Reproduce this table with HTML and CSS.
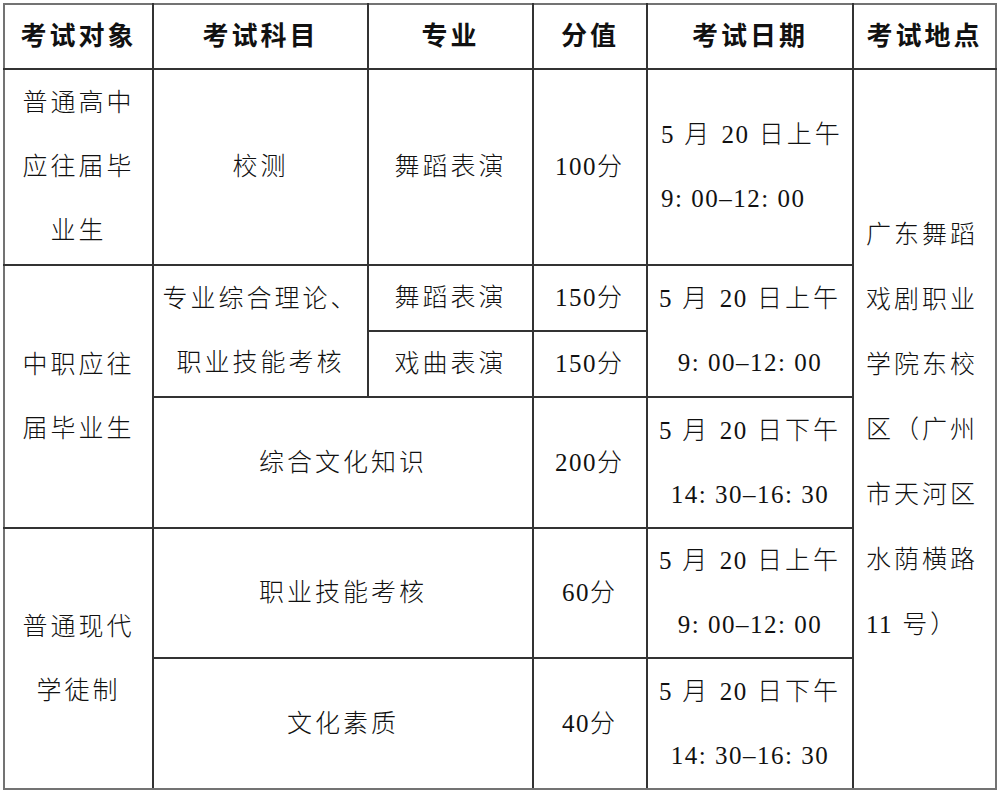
FILE: index.html
```html
<!DOCTYPE html>
<html lang="zh-CN">
<head>
<meta charset="utf-8">
<title>考试安排</title>
<link rel="stylesheet" href="styles.css">
</head>
<body>
<table class="exam">
  <colgroup>
    <col class="c1"><col class="c2"><col class="c3"><col class="c4"><col class="c5"><col class="c6">
  </colgroup>
  <thead>
    <tr class="rh">
      <th class="el">考试对象</th><th>考试科目</th><th>专业</th><th>分值</th><th>考试日期</th><th class="er">考试地点</th>
    </tr>
  </thead>
  <tbody>
    <tr class="r1">
      <td class="el">普通高中<br>应往届毕<br>业生</td>
      <td>校测</td>
      <td>舞蹈表演</td>
      <td><span class="n">100</span>分</td>
      <td class="date left"><span class="n">5</span> 月 <span class="n">20</span> 日上午<br><span class="n">9: 00–12: 00</span></td>
      <td rowspan="6" class="loc er eb">广东舞蹈<br>戏剧职业<br>学院东校<br>区（广州<br>市天河区<br>水荫横路<br><span class="n">11</span> 号）</td>
    </tr>
    <tr class="r2a">
      <td rowspan="3" class="el">中职应往<br>届毕业生</td>
      <td rowspan="2" class="date">专业综合理论、<br>职业技能考核</td>
      <td>舞蹈表演</td>
      <td><span class="n">150</span>分</td>
      <td rowspan="2" class="date"><span class="n">5</span> 月 <span class="n">20</span> 日上午<br><span class="n">9: 00–12: 00</span></td>
    </tr>
    <tr class="r2b">
      <td>戏曲表演</td>
      <td><span class="n">150</span>分</td>
    </tr>
    <tr class="r3">
      <td colspan="2">综合文化知识</td>
      <td><span class="n">200</span>分</td>
      <td class="date"><span class="n">5</span> 月 <span class="n">20</span> 日下午<br><span class="n">14: 30–16: 30</span></td>
    </tr>
    <tr class="r4">
      <td rowspan="2" class="el eb">普通现代<br>学徒制</td>
      <td colspan="2">职业技能考核</td>
      <td><span class="n">60</span>分</td>
      <td class="date"><span class="n">5</span> 月 <span class="n">20</span> 日上午<br><span class="n">9: 00–12: 00</span></td>
    </tr>
    <tr class="r5">
      <td colspan="2" class="eb">文化素质</td>
      <td class="eb"><span class="n">40</span>分</td>
      <td class="date eb"><span class="n">5</span> 月 <span class="n">20</span> 日下午<br><span class="n">14: 30–16: 30</span></td>
    </tr>
  </tbody>
</table>
</body>
</html>
```

FILE: styles.css
```css
html, body {
  margin: 0;
  background: #ffffff;
}

body {
  padding: 3px;
}

.exam {
  border-collapse: collapse;
  table-layout: fixed;
  width: 994px;
  border: 2px solid #737373;
  font-family: "Liberation Serif", "Noto Sans CJK SC", serif;
  font-size: 25px;
  font-weight: 300;
  color: #111111;
  letter-spacing: 3px;
}

.c1 { width: 149px; }
.c2 { width: 215px; }
.c3 { width: 165px; }
.c4 { width: 114px; }
.c5 { width: 206px; }
.c6 { width: 143px; }

.exam th,
.exam td {
  border: 2px solid #333333;
  padding: 0;
  text-align: center;
  vertical-align: middle;
  line-height: 64px;
  white-space: nowrap;
}

.exam th {
  font-weight: 700;
  font-size: 26px;
  line-height: 63px;
  letter-spacing: 3px;
  border-top-color: #737373;
}

.exam .el { border-left-color: #737373; }
.exam .er { border-right-color: #737373; }
.exam .eb { border-bottom-color: #737373; }

.rh { height: 65px; }
.r1 { height: 196px; }
.r2a { height: 66px; }
.r2b { height: 66px; }
.r3 { height: 131px; }
.r4 { height: 130px; }
.r5 { height: 131px; }

.n {
  font-weight: 400;
  letter-spacing: 1.5px;
}

.exam td.left {
  text-align: left;
  padding-left: 13px;
}

.exam td.loc {
  text-align: left;
  padding-left: 12px;
  line-height: 65px;
}
```
